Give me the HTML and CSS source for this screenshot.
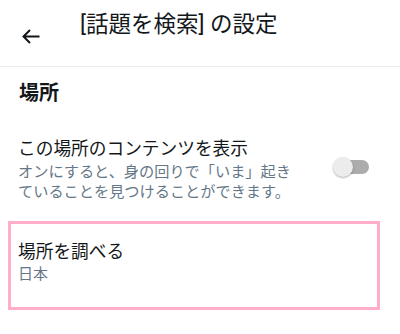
FILE: index.html
```html
<!DOCTYPE html>
<html lang="ja">
<head>
    <meta charset="UTF-8">
    <meta name="viewport" content="width=device-width, initial-scale=1.0">
    <title>[話題を検索] の設定</title>
    <link rel="stylesheet" href="styles.css">
</head>
<body>
    <!-- ヘッダー -->
    <div class="header">
        <span class="back">
            <svg width="18" height="15" viewBox="0 0 18 15">
                <path d="M1.5 7.5H17.5M8 1L1.5 7.5L8 14" fill="none" stroke="#14171a" stroke-width="2"/>
            </svg>
        </span>
        <h1 class="title">[話題を検索] の設定</h1>
    </div>

    <!-- 場所 -->
    <h2 class="section">場所</h2>

    <div class="row">
        <div class="row_text">
            <p class="row_title">この場所のコンテンツを表示</p>
            <p class="row_sub">オンにすると、身の回りで「いま」起きていることを見つけることができます。</p>
        </div>
        <span class="toggle"></span>
    </div>

    <div class="explore">
        <p class="row_title">場所を調べる</p>
        <p class="explore_sub">日本</p>
    </div>
</body>
</html>
```

FILE: styles.css
```css
*{
    margin: 0;
    padding: 0;
    box-sizing: border-box;
}
body{
    font-family: Roboto, "Noto Sans CJK JP", sans-serif;
    color: #14171a;
    background: #fff;
}
.header{
    display: flex;
    height: 67px;
    border-bottom: 1px solid #e6ecf0;
}
.header .back{
    width: 80px;
    padding: 29px 0 0 22px;
}
.header .back svg{
    display: block;
}
.header .title{
    font-size: 22.5px;
    font-weight: normal;
    line-height: 26px;
    padding-top: 11px;
}
.section{
    font-size: 20px;
    font-weight: bold;
    line-height: 26px;
    padding: 13px 19px 0;
}
.row{
    display: flex;
    padding: 32px 31px 0 18px;
}
.row .row_text{
    flex: 1;
}
.row_title{
    font-size: 17.7px;
    line-height: 22px;
}
.row_sub{
    font-size: 15.2px;
    line-height: 20px;
    color: #657786;
    margin-top: 2px;
    width: 282px;
}
.toggle{
    position: relative;
    width: 36px;
    height: 20px;
    margin-top: 19px;
}
.toggle::before{
    content: "";
    position: absolute;
    left: 8px;
    right: 0;
    top: 3px;
    height: 14px;
    border-radius: 7px;
    background: #acacac;
}
.toggle::after{
    content: "";
    position: absolute;
    left: 0;
    top: 0;
    width: 20px;
    height: 20px;
    border-radius: 50%;
    background: #ececec;
    box-shadow: 0 1px 2px rgba(0,0,0,.3);
}
.explore{
    width: 372px;
    margin: 19px 0 0 8px;
    border: 3px solid #ffadc9;
    padding: 17px 7px 23px;
}
.explore_sub{
    font-size: 15px;
    line-height: 20px;
    color: #657786;
    margin-top: 1px;
}
```
